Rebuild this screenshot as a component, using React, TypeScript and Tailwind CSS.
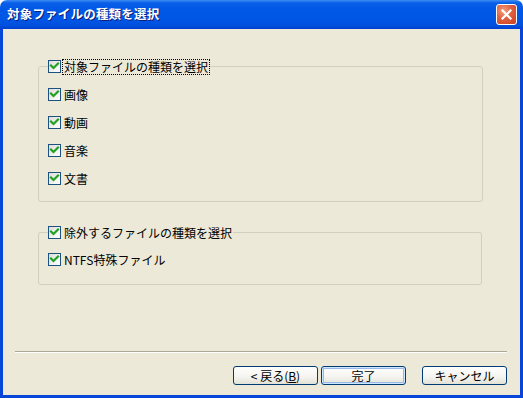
import React from "react";

const font = { fontFamily: '"Noto Sans CJK JP", "Liberation Sans", sans-serif' };

function Check() {
  return (
    <span className="inline-flex w-[13px] h-[13px] shrink-0 border border-[#1C5180] bg-[linear-gradient(135deg,#DCDCD7_0%,#F2F2EF_60%,#FFFFFF_100%)] items-center justify-center">
      <svg width="11" height="11" viewBox="0 0 11 11">
        <path d="M2 4.5 L4.5 7 L9 2.5" fill="none" stroke="#21A121" strokeWidth="2.2" strokeLinecap="square" />
      </svg>
    </span>
  );
}

function Item({ label, focus }: { label: React.ReactNode; focus?: boolean }) {
  return (
    <div className="flex items-center h-[13px]">
      <Check />
      <span
        className={
          "ml-[2px] text-[12px] leading-[14px] text-black px-[1px] " +
          (focus ? "outline outline-1 outline-dotted outline-black" : "")
        }
      >
        {label}
      </span>
    </div>
  );
}

function Btn({ children, def }: { children: React.ReactNode; def?: boolean }) {
  return (
    <button
      className={
        "w-[85px] h-[19px] rounded-[3px] border border-[#003C74] text-[12px] leading-[16px] text-black bg-[linear-gradient(180deg,#FFFFFF_0%,#F4F3EE_60%,#E3E1D6_100%)] flex items-center justify-center " +
        (def ? "shadow-[inset_0_0_0_1px_#CEE7FF,inset_0_0_0_2px_#98B8EA]" : "")
      }
      style={font}
    >
      {children}
    </button>
  );
}

export default function App() {
  return (
    <div className="w-[523px] h-[398px] bg-white flex flex-col select-none" style={font}>
      <div className="h-[29px] shrink-0 rounded-t-[7px] bg-[linear-gradient(180deg,#3D8DF5_0%,#0A5FE8_10%,#0058E6_30%,#0055E5_70%,#0050DC_88%,#003FD2_100%)] flex items-center pl-[7px] pr-[6px]">
        <span className="text-white font-bold text-[12.5px] tracking-[0.2px] [text-shadow:1px_1px_0_#0A1E7A]">
          対象ファイルの種類を選択
        </span>
        <div className="ml-auto w-[21px] h-[21px] rounded-[3px] border border-white bg-[radial-gradient(circle_at_35%_30%,#F0A080_0%,#E06040_45%,#C8401E_100%)] flex items-center justify-center">
          <svg width="13" height="13" viewBox="0 0 13 13">
            <path d="M2.5 2.5 L10.5 10.5 M10.5 2.5 L2.5 10.5" stroke="white" strokeWidth="2.2" strokeLinecap="square" />
          </svg>
        </div>
      </div>
      <div className="flex-1 flex flex-col bg-[#ECE9D8] border-l-[3px] border-r-[3px] border-b-[3px] border-[#0845D9]">
        <fieldset className="mt-[31px] ml-[35px] mr-[37px] border border-[#D0D0BF] rounded-[3px] px-[9px] pb-[16px]">
          <legend className="px-[0px] ml-0">
            <Item label="対象ファイルの種類を選択" focus />
          </legend>
          <div className="flex flex-col gap-[15px] mt-[15px]">
            <Item label="画像" />
            <Item label="動画" />
            <Item label="音楽" />
            <Item label="文書" />
          </div>
        </fieldset>
        <fieldset className="mt-[24px] ml-[35px] mr-[38px] border border-[#D0D0BF] rounded-[3px] px-[9px] pb-[18px]">
          <legend className="px-0">
            <Item label="除外するファイルの種類を選択" />
          </legend>
          <div className="flex flex-col mt-[14px]">
            <Item label="NTFS特殊ファイル" />
          </div>
        </fieldset>
        <div className="mt-auto ml-[12px] mr-[13px] h-[2px] border-t border-[#ACA899] border-b border-b-white" />
        <div className="flex justify-end mt-[13px] mb-[10px] mr-[13px]">
          <Btn>
            &lt; 戻る(<u>B</u>)
          </Btn>
          <div className="ml-[3px]">
            <Btn def>完了</Btn>
          </div>
          <div className="ml-[16px]">
            <Btn>キャンセル</Btn>
          </div>
        </div>
      </div>
    </div>
  );
}
